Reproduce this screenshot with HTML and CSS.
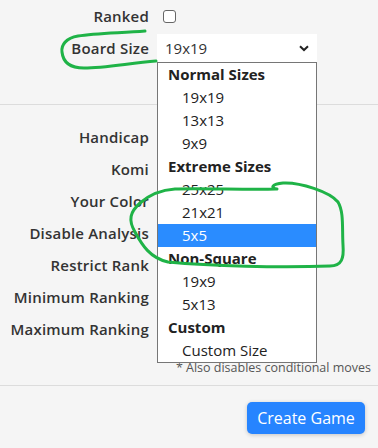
FILE: index.html
```html
<!DOCTYPE html>
<html lang="en">
<head>
  <meta charset="UTF-8" />
  <title>Create Game</title>
  <link rel="stylesheet" href="styles.css">
</head>
<body>
  <div class="page">
    <!-- Regras principais -->
    <div class="secao topo">
      <div class="linha">
        <label class="rotulo">Ranked</label>
        <div class="campo"><span class="caixa"></span></div>
      </div>
      <div class="linha">
        <label class="rotulo">Board Size</label>
        <div class="campo">
          <div class="select">
            <span>19x19</span>
            <svg class="seta" width="10" height="7" viewBox="0 0 10 7"><path d="M1 1.2 L5 5 L9 1.2" fill="none" stroke="#222" stroke-width="2"/></svg>
          </div>
          <ul class="lista">
            <li class="grupo">Normal Sizes</li>
            <li>19x19</li>
            <li>13x13</li>
            <li>9x9</li>
            <li class="grupo">Extreme Sizes</li>
            <li>25x25</li>
            <li>21x21</li>
            <li class="ativo">5x5</li>
            <li class="grupo">Non-Square</li>
            <li>19x9</li>
            <li>5x13</li>
            <li class="grupo">Custom</li>
            <li>Custom Size</li>
          </ul>
        </div>
      </div>
    </div>

    <!-- Opções avançadas -->
    <div class="secao meio">
      <div class="linha"><label class="rotulo">Handicap</label><div class="campo"></div></div>
      <div class="linha"><label class="rotulo">Komi</label><div class="campo"></div></div>
      <div class="linha"><label class="rotulo">Your Color</label><div class="campo"></div></div>
      <div class="linha"><label class="rotulo">Disable Analysis</label><div class="campo"></div></div>
      <div class="linha"><label class="rotulo">Restrict Rank</label><div class="campo"></div></div>
      <div class="linha"><label class="rotulo">Minimum Ranking</label><div class="campo"></div></div>
      <div class="linha"><label class="rotulo">Maximum Ranking</label><div class="campo"></div></div>
      <div class="nota">* Also disables conditional moves</div>
    </div>

    <div class="rodape">
      <button type="button" class="criar-btn">Create Game</button>
    </div>

    <!-- anotações em verde -->
    <svg class="rabisco" width="378" height="448" viewBox="0 0 378 448">
      <path d="M145 31 C120 33 95 33 78 36 C66 38 61 45 62 52 C63 62 70 68 84 68 C105 68 130 63 156 61" fill="none" stroke="#1fb347" stroke-width="3" stroke-linecap="round"/>
      <path d="M276 189 C250 190 200 188 175 189 C160 190 148 196 140 203 C130 212 128 220 135 232 C142 245 150 258 168 262 C210 266 280 268 330 266 C342 266 344 258 343 245 C342 228 344 212 338 202 C330 192 300 182 283 183 C272 184 270 188 277 189" fill="none" stroke="#1fb347" stroke-width="3" stroke-linecap="round"/>
    </svg>
  </div>
</body>
</html>
```

FILE: styles.css
```css
body {
  margin: 0;
  background: #f5f5f5;
  font-family: 'Open Sans', Arial, sans-serif;
  color: #333;
}
.page {
  width: 378px;
  height: 448px;
  position: relative;
  overflow: hidden;
}
.secao {
  border-bottom: 1px solid #dcdcdc;
}
.topo {
  padding-bottom: 40px;
}
.meio {
  padding-top: 16px;
  padding-bottom: 9px;
}
.linha {
  display: grid;
  grid-template-columns: 149px 1fr;
  column-gap: 8px;
  align-items: center;
  height: 32px;
}
.rotulo {
  text-align: right;
  font-size: 15px;
  font-weight: 600;
  color: #333;
  white-space: nowrap;
  letter-spacing: 0.2px;
}
.campo {
  position: relative;
  height: 28px;
  display: flex;
  align-items: center;
}
.caixa {
  width: 11px;
  height: 11px;
  margin-left: 6px;
  border: 1px solid #666;
  border-radius: 3px;
  background: #fff;
}
.select {
  width: 160px;
  height: 28px;
  background: #fff;
  display: flex;
  align-items: center;
  justify-content: space-between;
  padding: 0 6px 0 8px;
  box-sizing: border-box;
  font-size: 15px;
  color: #333;
}
.seta {
  margin-right: 2px;
}
.lista {
  position: absolute;
  top: 28px;
  left: 0;
  width: 160px;
  box-sizing: border-box;
  margin: 0;
  padding: 0;
  list-style: none;
  background: #fff;
  border: 1px solid #767676;
  z-index: 2;
}
.lista li {
  height: 23px;
  line-height: 23px;
  padding-left: 24px;
  font-size: 15px;
  color: #222;
}
.lista li.grupo {
  padding-left: 10px;
  font-weight: 700;
}
.lista li.ativo {
  background: #2a8cff;
  color: #fff;
}
.nota {
  text-align: right;
  padding-right: 7px;
  margin-top: 14px;
  font-size: 12.5px;
  color: #555;
}
.rodape {
  display: flex;
  justify-content: flex-end;
  padding: 16px 13px 0 0;
}
.criar-btn {
  background: #2684ff;
  color: #fff;
  border: none;
  border-radius: 5px;
  font-family: 'Open Sans', Arial, sans-serif;
  font-size: 16px;
  font-weight: 500;
  width: 118px;
  height: 32px;
  box-shadow: 0 1px 4px #00000033;
  cursor: pointer;
}
.rabisco {
  position: absolute;
  top: 0;
  left: 0;
  z-index: 5;
  pointer-events: none;
}
```
